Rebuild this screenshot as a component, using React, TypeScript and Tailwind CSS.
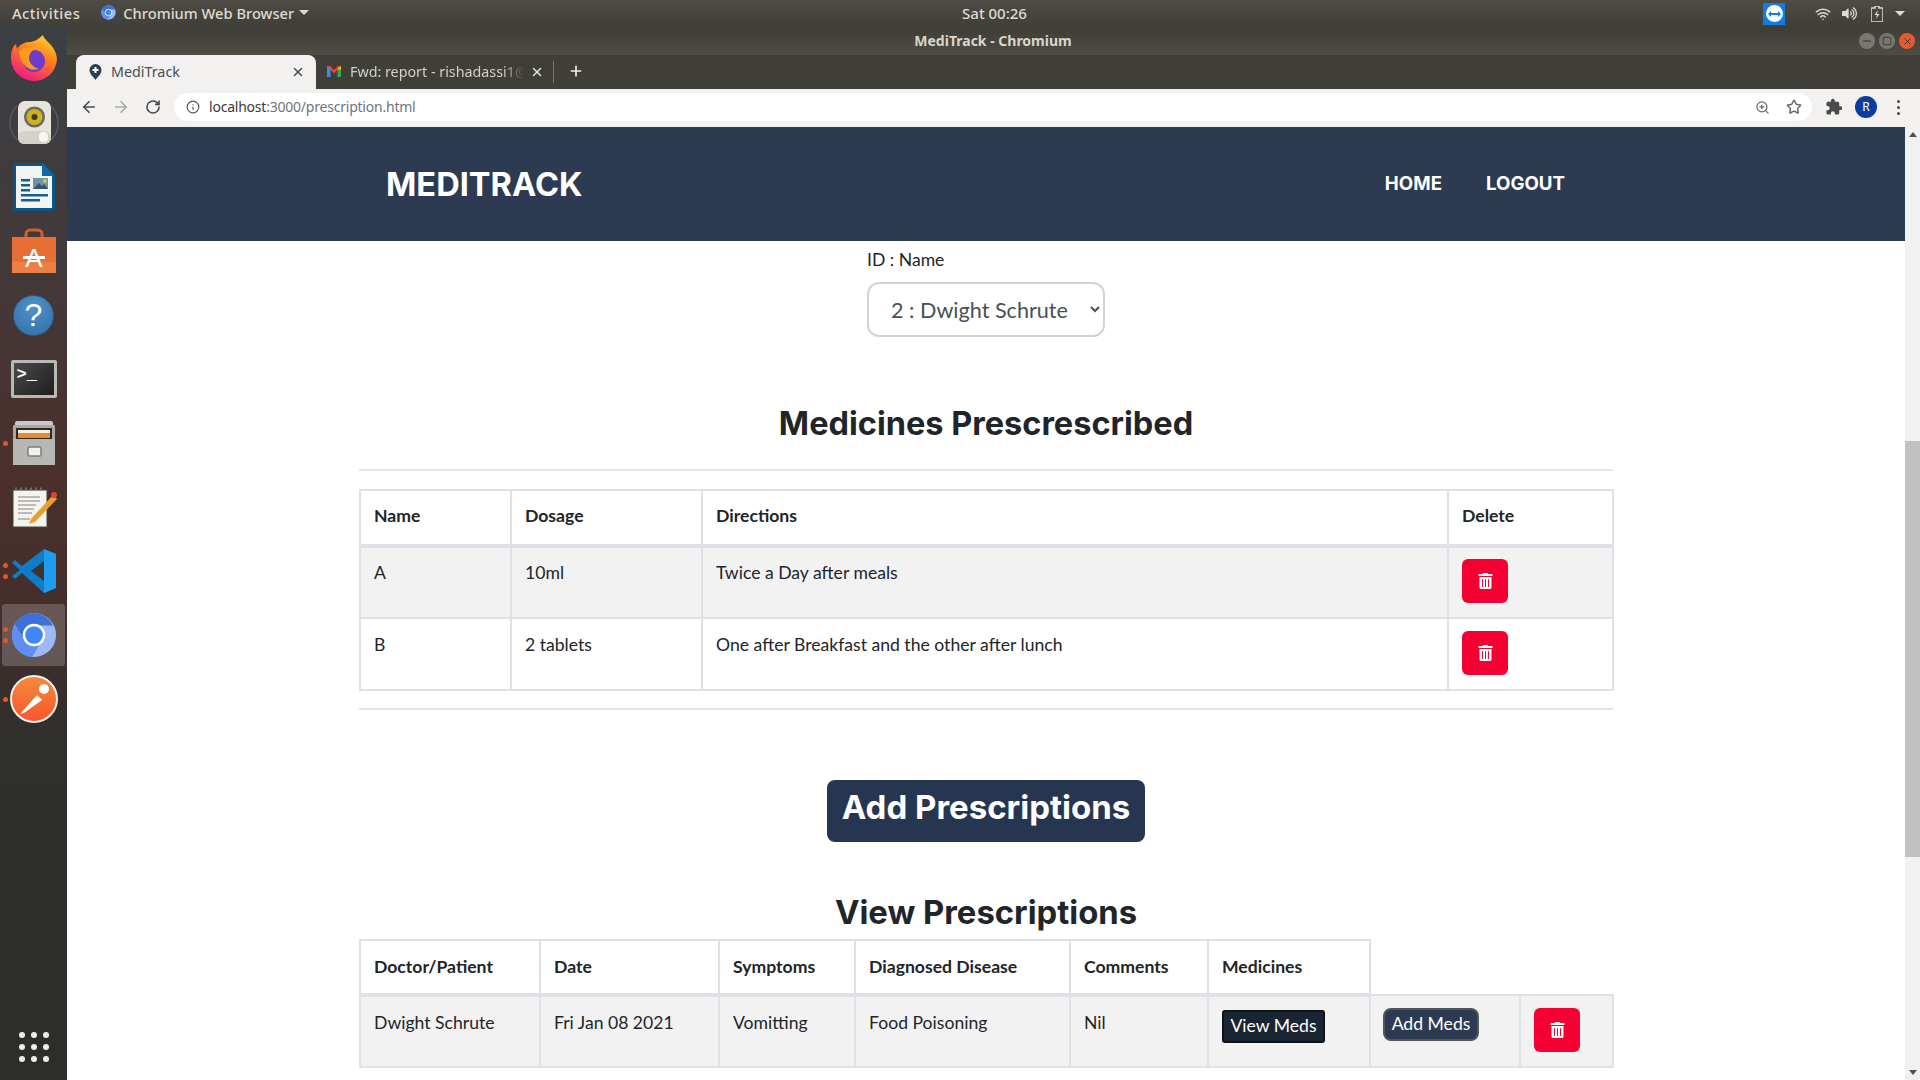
import { ArrowLeft, ArrowRight, RotateCw, Info, ZoomIn, Star, Plus, X, Wifi, Minus, Square } from "lucide-react";
import { FaTrashAlt, FaVolumeUp } from "react-icons/fa";
import { MdExtension } from "react-icons/md";

const medicines = [
  { name: "A", dosage: "10ml", directions: "Twice a Day after meals" },
  { name: "B", dosage: "2 tablets", directions: "One after Breakfast and the other after lunch" },
];

const cellBorder = "border-2 border-[#dee2e6]";

function DeleteButton() {
  return (
    <button className="flex h-[44px] w-[46px] items-center justify-center rounded-[6px] bg-[#f40033] text-white">
      <FaTrashAlt className="h-[16px] w-[15px]" />
    </button>
  );
}

function ChromiumIcon({ size }: { size: number }) {
  return (
    <svg width={size} height={size} viewBox="0 0 48 48">
      <circle cx="24" cy="24" r="23" fill="#9dbaf6" />
      <path d="M24 1a23 23 0 0 0-20 11.5L14 30l10-16h20A23 23 0 0 0 24 1z" fill="#3f6fd8" />
      <path d="M4 12.5A23 23 0 0 0 22 47l10-17-18 0z" fill="#5f8eef" />
      <circle cx="24" cy="24" r="10.5" fill="#4285f4" stroke="#fff" strokeWidth="2.5" />
    </svg>
  );
}

function Firefox() {
  return (
    <svg width="48" height="50" viewBox="0 0 48 50">
      <defs>
        <linearGradient id="ff" x1="0.8" y1="0" x2="0.3" y2="1">
          <stop offset="0" stopColor="#ffd52e" />
          <stop offset="0.45" stopColor="#ff7a1f" />
          <stop offset="1" stopColor="#f0148c" />
        </linearGradient>
      </defs>
      <path d="M33 1c1 6 13 10 14 24a23 23 0 1 1-46-2c0-6 2-11 5-13l1 5c3-5 8-7 12-7 5 0 8-2 14-7z" fill="url(#ff)" />
      <circle cx="24" cy="27" r="11" fill="#6f3bc9" />
      <path d="M9 18c5-6 14-7 20-3-5 0-8 2-9 5-3 5 1 13 9 15-9 3-18-3-20-17z" fill="#ff9a1f" />
    </svg>
  );
}

function Speaker() {
  return (
    <svg width="52" height="46" viewBox="0 0 52 46">
      <path d="M9 6a24 24 0 0 0 0 34M43 6a24 24 0 0 1 0 34" fill="none" stroke="#5a7080" strokeOpacity="0.6" strokeWidth="1.5" />
      <rect x="10" y="1" width="33" height="43" rx="7" fill="#e6e4dc" />
      <rect x="10" y="31" width="33" height="13" rx="6" fill="#d4d2ca" />
      <circle cx="26.500" cy="17" r="10.500" fill="#6a695e" />
      <circle cx="26.500" cy="17" r="8" fill="#cdb21f" />
      <circle cx="26.500" cy="17" r="3" fill="#3d3a2a" />
      <rect x="31" y="32" width="9" height="10" rx="4" fill="#f7f6f0" />
    </svg>
  );
}

function Writer() {
  return (
    <svg width="42" height="48" viewBox="0 0 42 48">
      <path d="M2 0h28l12 12v33a3 3 0 0 1-3 3H3a3 3 0 0 1-3-3V2a2 2 0 0 1 2-2z" fill="#0a5585" />
      <path d="M3 3h26l10 10v32H3z" fill="#f3f4f4" />
      <path d="M29 0l13 13H29z" fill="#0d6aa8" />
      <rect x="8" y="16" width="9" height="2.5" fill="#185f8e" />
      <rect x="8" y="21" width="9" height="2.5" fill="#185f8e" />
      <rect x="8" y="26" width="9" height="2.5" fill="#185f8e" />
      <rect x="8" y="31" width="27" height="2.5" fill="#185f8e" />
      <rect x="8" y="36" width="19" height="2.5" fill="#185f8e" />
      <rect x="20" y="15" width="15" height="11" fill="#6f93ad" />
      <path d="M20 26l6-6 3 3 2-2 4 5z" fill="#37566e" />
      <circle cx="32" cy="18" r="2" fill="#e6c04a" />
    </svg>
  );
}

function Store() {
  return (
    <svg width="44" height="46" viewBox="0 0 44 46">
      <path d="M14 14V6a4 4 0 0 1 4-4h8a4 4 0 0 1 4 4v8" fill="none" stroke="#d25f2c" strokeWidth="3" />
      <path d="M0 9h44v36H0z" fill="#ec7f42" />
      <path d="M0 9h44v25H0z" fill="#e66f36" />
      <text x="22" y="39" textAnchor="middle" fontFamily="Liberation Sans, sans-serif" fontSize="26" fill="#fff">
        A
      </text>
      <rect x="11" y="28" width="22" height="3" fill="#fff" />
    </svg>
  );
}

function Help() {
  return (
    <div className="flex h-[41px] w-[41px] items-center justify-center rounded-full border border-[#2b5c8a] bg-[radial-gradient(circle_at_50%_30%,#4f93c9,#2f6ea5)] font-['Liberation_Sans',sans-serif] text-[32px] text-white">
      ?
    </div>
  );
}

function Terminal() {
  return (
    <div className="flex h-[38px] w-[46px] items-start rounded-[2px] border-[3px] border-[#b9b9b4] bg-[linear-gradient(135deg,#4a4a4a,#1e1e1e)] px-[3px] pt-[2px] font-['Liberation_Mono',monospace] text-[17px] font-bold leading-[20px] text-white">
      &gt;_
    </div>
  );
}

function Files() {
  return (
    <svg width="42" height="44" viewBox="0 0 42 44">
      <rect x="2" y="0" width="38" height="10" rx="2" fill="#c9c9c7" />
      <rect x="0" y="4" width="42" height="40" rx="1" fill="#a8a8a6" />
      <rect x="3" y="7" width="36" height="13" fill="#2b2a28" />
      <rect x="5" y="9" width="32" height="3" fill="#f4f1e6" />
      <rect x="5" y="12" width="32" height="5" fill="#e88b33" />
      <rect x="0" y="18" width="42" height="26" fill="#b7b7b5" />
      <rect x="15" y="26" width="13" height="9" rx="1.5" fill="#f0f0ee" stroke="#7e7e7c" strokeWidth="1.5" />
    </svg>
  );
}

function Notepad() {
  return (
    <svg width="46" height="42" viewBox="0 0 46 42">
      <rect x="2" y="4" width="34" height="37" fill="#f4f3ee" stroke="#45443f" strokeWidth="1" />
      <path d="M4 3h30" stroke="#6a6a66" strokeWidth="3" strokeDasharray="2 3" />
      <path d="M7 11h22M7 15h22M7 19h18M7 23h16M7 27h14M7 33h12" stroke="#a8a8a3" strokeWidth="1.5" />
      <path d="M20 33l22-24 4 4-22 23-6 2z" fill="#ee9c2f" />
      <circle cx="43" cy="9" r="3" fill="#d8453f" />
    </svg>
  );
}

function VSCode() {
  return (
    <svg width="44" height="44" viewBox="0 0 44 44">
      <path d="M32 0l12 5v34l-12 5L10 24 3 30 0 27l8-6-8-7 3-3 7 6z" fill="#0e7cc7" />
      <path d="M32 0l12 5v34l-12 5z" fill="#1f9cf0" />
      <path d="M32 12L19 22l13 10z" fill="#3c3432" />
    </svg>
  );
}

function Postman() {
  return (
    <svg width="48" height="48" viewBox="0 0 48 48">
      <defs>
        <linearGradient id="pm" x1="0" y1="0" x2="0" y2="1">
          <stop offset="0" stopColor="#f58a3c" />
          <stop offset="1" stopColor="#f9562a" />
        </linearGradient>
      </defs>
      <circle cx="24" cy="24" r="23" fill="url(#pm)" stroke="#f5f0ea" strokeWidth="2" />
      <path d="M10 39l17-19 5 5-18 13z" fill="#fff" />
      <circle cx="34" cy="14" r="5" fill="#fff" />
    </svg>
  );
}

const dockItems = [
  { icon: <Firefox />, dots: 0 },
  { icon: <Speaker />, dots: 0 },
  { icon: <Writer />, dots: 0 },
  { icon: <Store />, dots: 0 },
  { icon: <Help />, dots: 0 },
  { icon: <Terminal />, dots: 0 },
  { icon: <Files />, dots: 1 },
  { icon: <Notepad />, dots: 0 },
  { icon: <VSCode />, dots: 2 },
  { icon: <ChromiumIcon size={46} />, dots: 2, active: true },
  { icon: <Postman />, dots: 1 },
];

function Dock() {
  return (
    <div className="flex h-full w-[67px] shrink-0 flex-col items-center bg-[linear-gradient(180deg,#3b4043_0%,#42393a_22%,#4b302c_42%,#432e2b_56%,#2f2f2c_68%,#2d2e2c_100%)] pb-[18px]">
      {dockItems.map((item, i) => (
        <div key={i} className="relative flex h-[64px] w-full shrink-0 items-center justify-center">
          {item.active && <div className="absolute inset-x-[2px] inset-y-[1px] rounded-[3px] bg-white/20" />}
          <div className="relative">{item.icon}</div>
          {item.dots > 0 && (
            <div className="absolute left-[3px] top-0 flex h-full flex-col justify-center gap-[6px]">
              {Array.from({ length: item.dots }).map((_, d) => (
                <div key={d} className="h-[5px] w-[5px] rounded-full bg-[#e9541f]" />
              ))}
            </div>
          )}
        </div>
      ))}
      <div className="mt-auto grid grid-cols-3 gap-[6px]">
        {Array.from({ length: 9 }).map((_, i) => (
          <div key={i} className="h-[6px] w-[6px] rounded-full bg-[#f0f0ee]" />
        ))}
      </div>
    </div>
  );
}

function TopBar() {
  return (
    <div className="grid h-[27px] shrink-0 grid-cols-3 items-center bg-[linear-gradient(180deg,#4f4c45,#3f3e38)] font-['Noto_Sans',sans-serif] text-[14.700px] font-medium text-[#dfdbd0]">
      <div className="flex items-center pb-[1px] pl-[12px]">
        <span className="tracking-[0.5px]">Activities</span>
        <span className="ml-[21px]">
          <ChromiumIcon size={15} />
        </span>
        <span className="ml-[7px]">Chromium Web Browser</span>
        <span className="ml-[5px] h-0 w-0 border-x-[5px] border-t-[5px] border-x-transparent border-t-[#dfdbd0]" />
      </div>
      <div className="pb-[1px] pl-[69px] text-center text-[15px]">Sat 00:26</div>
      <div className="flex items-center justify-end pr-[15px]">
        <div className="mr-[2px] flex h-[22px] w-[22px] items-center justify-center bg-[#0e7ee0]">
          <div className="flex h-[17px] w-[17px] items-center justify-center rounded-full bg-white text-[#0e7ee0]">
            <svg width="13" height="8" viewBox="0 0 13 8">
              <path d="M0 4l3-3v2h7V1l3 3-3 3V5H3v2z" fill="currentColor" />
            </svg>
          </div>
        </div>
        <Wifi className="ml-[28px] h-[16px] w-[16px]" strokeWidth={2.2} />
        <FaVolumeUp className="ml-[11px] h-[15px] w-[15px]" />
        <svg className="ml-[14px]" width="12" height="16" viewBox="0 0 12 16">
          <path d="M4 0h4v2h3a1 1 0 0 1 1 1v12a1 1 0 0 1-1 1H1a1 1 0 0 1-1-1V3a1 1 0 0 1 1-1h3z" fill="none" stroke="currentColor" strokeWidth="1.5" />
          <path d="M7 4L3.5 9H6l-1 4 3.5-5H6z" fill="currentColor" />
        </svg>
        <span className="ml-[12px] h-0 w-0 border-x-[5px] border-t-[5px] border-x-transparent border-t-[#dfdbd0]" />
      </div>
    </div>
  );
}

function TitleBar() {
  return (
    <div className="flex h-[28px] shrink-0 items-center bg-[linear-gradient(180deg,#3e3d37,#4e4c45)] font-['Noto_Sans',sans-serif] text-[14px] font-bold text-[#d9d6cc]">
      <div className="flex-1 pb-[2px] pl-[60px] text-center">MediTrack - Chromium</div>
      <div className="flex items-center gap-[4px] pr-[5px]">
        <div className="flex h-[16px] w-[16px] items-center justify-center rounded-full bg-[#77766f] text-[#33322e]">
          <Minus className="h-[12px] w-[12px]" />
        </div>
        <div className="flex h-[16px] w-[16px] items-center justify-center rounded-full bg-[#77766f] text-[#33322e]">
          <Square className="h-[10px] w-[10px]" />
        </div>
        <div className="flex h-[16px] w-[16px] items-center justify-center rounded-full bg-[#e9592b] text-[#33322e]">
          <X className="h-[11px] w-[11px]" />
        </div>
      </div>
    </div>
  );
}

function TabStrip() {
  return (
    <div className="flex h-[34px] shrink-0 items-end bg-[#3f3e38] pl-[9px] font-['Noto_Sans',sans-serif] text-[14.300px]">
      <div className="flex h-[34px] w-[240px] items-center rounded-t-[8px] bg-[#f2f1ef] pb-[1px] pl-[13px] pr-[11px] text-[#4a4d52]">
        <svg width="13" height="16" viewBox="0 0 13 16">
          <path d="M6.5 0A6 6 0 0 1 12.500 6c0 4-4 7-6 10-2-3-6-6-6-10a6 6 0 0 1 6-6z" fill="#2c3e50" />
          <path d="M5.500 3h2v2h2v2h-2v2h-2V7h-2V5h2z" fill="#fff" />
        </svg>
        <span className="ml-[9px] flex-1">MediTrack</span>
        <X className="h-[14px] w-[14px] text-[#45474a]" strokeWidth={2.5} />
      </div>
      <div className="flex h-[34px] w-[237px] items-center pb-[1px] pl-[11px] pr-[9px] text-[#d2d1cb]">
        <svg width="14" height="11" viewBox="0 0 14 11">
          <rect x="0" y="0" width="3.500" height="11" fill="#4285f4" />
          <rect x="10.500" y="0" width="3.500" height="11" fill="#34a853" />
          <path d="M0 0h3l4 4 4-4h3L7 7.500z" fill="#ea4335" />
          <path d="M10.500 3l3.500-3v4z" fill="#fbbc04" />
        </svg>
        <span className="ml-[9px] w-[174px] overflow-hidden whitespace-nowrap [mask-image:linear-gradient(90deg,#000_88%,transparent)]">
          Fwd: report - rishadassi1@
        </span>
        <X className="ml-auto h-[14px] w-[14px] text-[#e8e7e2]" strokeWidth={2.5} />
      </div>
      <div className="mb-[6px] h-[22px] w-px bg-[#77766f]" />
      <Plus className="mb-[10px] ml-[14px] h-[16px] w-[16px] text-[#f0efea]" strokeWidth={2.5} />
    </div>
  );
}

function Toolbar() {
  return (
    <div className="flex h-[38px] shrink-0 items-center bg-[#f2f1ef] pb-[2px] pl-[13px] pr-[20px] font-['Noto_Sans',sans-serif] text-[#55565a]">
      <ArrowLeft className="h-[18px] w-[18px] text-[#4a4a4a]" strokeWidth={2.2} />
      <ArrowRight className="ml-[14px] h-[18px] w-[18px] text-[#a9a9a8]" strokeWidth={2.2} />
      <RotateCw className="ml-[15px] h-[16px] w-[16px] text-[#4a4a4a]" strokeWidth={2.4} />
      <div className="ml-[13px] flex h-[28px] flex-1 items-center rounded-full bg-white pl-[12px] pr-[10px]">
        <Info className="h-[14px] w-[14px] text-[#55565a]" />
        <span className="ml-[9px] pb-[1px] text-[14px] tracking-[-0.22px]">
          <span className="text-[#3a3a3a]">localhost</span>
          <span className="text-[#6d7480]">:3000/prescription.html</span>
        </span>
        <ZoomIn className="ml-auto h-[15px] w-[15px] text-[#6a6a6a]" />
        <Star className="ml-[16px] h-[16px] w-[16px] text-[#6a6a6a]" strokeWidth={2.2} />
      </div>
      <MdExtension className="ml-[13px] h-[18px] w-[18px] text-[#4a4a4a]" />
      <div className="ml-[12px] flex h-[22px] w-[22px] items-center justify-center rounded-full bg-[#0b3d9c] text-[12px] text-white">
        R
      </div>
      <div className="ml-[20px] flex flex-col gap-[3px]">
        <span className="h-[3px] w-[3px] rounded-full bg-[#4a4a4a]" />
        <span className="h-[3px] w-[3px] rounded-full bg-[#4a4a4a]" />
        <span className="h-[3px] w-[3px] rounded-full bg-[#4a4a4a]" />
      </div>
    </div>
  );
}

function Scrollbar() {
  return (
    <div className="flex w-[15px] shrink-0 flex-col items-center bg-[#f1f1f1]">
      <span className="mt-[5px] h-0 w-0 border-x-[4px] border-b-[5px] border-x-transparent border-b-[#505050]" />
      <div className="mt-[304px] h-[416px] w-full bg-[#c1c1c1]" />
      <span className="mb-[5px] mt-auto h-0 w-0 border-x-[4px] border-t-[5px] border-x-transparent border-t-[#505050]" />
    </div>
  );
}

function MedicinesTable() {
  return (
    <table className="w-[1253px] table-fixed border-collapse text-[17.600px] text-[#212529]">
      <colgroup>
        <col className="w-[151px]" />
        <col className="w-[191px]" />
        <col className="w-[746px]" />
        <col className="w-[165px]" />
      </colgroup>
      <thead>
        <tr className="h-[56px]">
          {["Name", "Dosage", "Directions", "Delete"].map((h) => (
            <th key={h} className={`${cellBorder} border-b-4 px-[13px] pb-[2px] text-left align-middle font-bold`}>
              {h}
            </th>
          ))}
        </tr>
      </thead>
      <tbody>
        {medicines.map((m, i) => (
          <tr key={m.name} className={i === 0 ? "bg-[#f2f2f2]" : "bg-white"}>
            <td className={`${cellBorder} h-[72px] px-[13px] ${i === 0 ? "pt-[12px]" : "pt-[13px]"} align-top`}>{m.name}</td>
            <td className={`${cellBorder} px-[13px] ${i === 0 ? "pt-[12px]" : "pt-[13px]"} align-top`}>{m.dosage}</td>
            <td className={`${cellBorder} px-[13px] ${i === 0 ? "pt-[12px]" : "pt-[13px]"} align-top`}>{m.directions}</td>
            <td className={`${cellBorder} px-[13px] ${i === 0 ? "pb-[4px]" : "pb-[2px]"} align-middle`}>
              <DeleteButton />
            </td>
          </tr>
        ))}
      </tbody>
    </table>
  );
}

function PrescriptionsTable() {
  return (
    <table className="w-[1253px] table-fixed border-collapse text-[17.600px] text-[#212529]">
      <colgroup>
        <col className="w-[180px]" />
        <col className="w-[179px]" />
        <col className="w-[136px]" />
        <col className="w-[215px]" />
        <col className="w-[138px]" />
        <col className="w-[162px]" />
        <col className="w-[150px]" />
        <col className="w-[93px]" />
      </colgroup>
      <thead>
        <tr className="h-[55px]">
          {["Doctor/Patient", "Date", "Symptoms", "Diagnosed Disease", "Comments", "Medicines"].map((h) => (
            <th key={h} className={`${cellBorder} border-b-4 px-[13px] text-left align-middle font-bold`}>
              {h}
            </th>
          ))}
        </tr>
      </thead>
      <tbody>
        <tr className="bg-[#f2f2f2]">
          {["Dwight Schrute", "Fri Jan 08 2021", "Vomitting", "Food Poisoning", "Nil"].map((v) => (
            <td key={v} className={`${cellBorder} h-[72px] px-[13px] pt-[13px] align-top`}>
              {v}
            </td>
          ))}
          <td className={`${cellBorder} px-[13px] align-top`}>
            <button className="mt-[13px] h-[33px] w-[103px] rounded-[3px] border-2 border-[#0e1318] bg-[#1a2533] pb-[1px] text-white">
              View Meds
            </button>
          </td>
          <td className={`${cellBorder} px-[12px] align-top`}>
            <button className="mt-[12px] h-[33px] w-[96px] rounded-[8px] border-2 border-[#50565e] bg-[#2c3b52] pb-[1px] text-white">
              Add Meds
            </button>
          </td>
          <td className={`${cellBorder} px-[13px] pb-[2px] align-middle`}>
            <DeleteButton />
          </td>
        </tr>
      </tbody>
    </table>
  );
}

function Page() {
  return (
    <div className="min-w-0 flex-1 overflow-hidden bg-white font-['Lato',sans-serif] text-[#212529]">
      <header className="flex h-[114px] items-center justify-between bg-[#2c3b52] pl-[319px] pr-[340px] font-['Inter',sans-serif] text-white">
        <div className="text-[32.600px] font-bold">MEDITRACK</div>
        <nav className="flex gap-[44px] text-[18.700px] font-bold">
          <a>HOME</a>
          <a>LOGOUT</a>
        </nav>
      </header>
      <div className="flex flex-col items-center">
        <div className="mt-[5px] w-[238px]">
          <label className="block text-[17.600px] leading-[27px]">ID : Name</label>
          <select className="mt-[9px] block h-[55px] w-full rounded-[12px] border-2 border-[#ced4da] bg-white pl-[18px] text-[21.600px] text-[#495057]">
            <option>2 : Dwight Schrute</option>
          </select>
        </div>
        <h2 className="mt-[62px] font-['Inter',sans-serif] text-[32.500px] font-bold leading-[50px]">Medicines Prescrescribed</h2>
        <hr className="mt-[20px] w-[1254px] border-t-2 border-[#e3e5e8]" />
        <div className="ml-[1px] mt-[18px]">
          <MedicinesTable />
        </div>
        <hr className="mt-[17px] w-[1254px] border-t-2 border-[#e3e5e8]" />
        <button className="mt-[70px] h-[62px] w-[318px] rounded-[8px] bg-[#263650] pb-[6px] font-['Inter',sans-serif] text-[33px] font-bold text-white">
          Add Prescriptions
        </button>
        <h2 className="mt-[45px] font-['Inter',sans-serif] text-[32.800px] font-bold leading-[50px]">View Prescriptions</h2>
        <div className="ml-[1px] mt-[2px]">
          <PrescriptionsTable />
        </div>
      </div>
    </div>
  );
}

export default function App() {
  return (
    <div className="flex h-[1080px] w-[1920px] flex-col overflow-hidden">
      <TopBar />
      <div className="flex min-h-0 flex-1">
        <Dock />
        <div className="flex min-w-0 flex-1 flex-col">
          <TitleBar />
          <TabStrip />
          <Toolbar />
          <div className="flex min-h-0 flex-1">
            <Page />
            <Scrollbar />
          </div>
        </div>
      </div>
    </div>
  );
}
